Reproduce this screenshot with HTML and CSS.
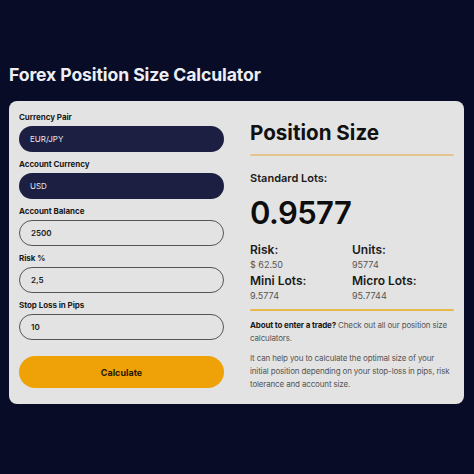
FILE: index.html
```html
<!DOCTYPE html>
<html>
<head>
<meta charset="utf-8">
<link rel="stylesheet" href="styles.css">
</head>
<body>
<div class="page">
  <h1 class="title">Forex Position Size Calculator</h1>
  <div class="card">
    <div class="form">
      <div class="group">
        <div class="label">Currency Pair</div>
        <div class="field dark">EUR/JPY</div>
      </div>
      <div class="group">
        <div class="label">Account Currency</div>
        <div class="field dark">USD</div>
      </div>
      <div class="group">
        <div class="label">Account Balance</div>
        <div class="field outline">2500</div>
      </div>
      <div class="group">
        <div class="label">Risk %</div>
        <div class="field outline">2,5</div>
      </div>
      <div class="group">
        <div class="label">Stop Loss in Pips</div>
        <div class="field outline">10</div>
      </div>
      <div class="button">Calculate</div>
    </div>
    <div class="result">
      <div class="res-title">Position Size</div>
      <div class="rule tan"></div>
      <div class="std-label">Standard Lots:</div>
      <div class="big">0.9577</div>
      <div class="stats">
        <div class="stat"><div class="stat-k">Risk:</div><div class="stat-v">$ 62.50</div></div>
        <div class="stat"><div class="stat-k">Units:</div><div class="stat-v">95774</div></div>
        <div class="stat"><div class="stat-k">Mini Lots:</div><div class="stat-v">9.5774</div></div>
        <div class="stat"><div class="stat-k">Micro Lots:</div><div class="stat-v">95.7744</div></div>
      </div>
      <div class="rule gold"></div>
      <p class="note first"><b>About to enter a trade?</b> Check out all our position size calculators.</p>
      <p class="note">It can help you to calculate the optimal size of your initial position depending on your stop-loss in pips, risk tolerance and account size.</p>
    </div>
  </div>
</div>
</body>
</html>
```
FILE: styles.css
```css
html, body {
  margin: 0;
  padding: 0;
  background: #080c26;
  font-family: Inter, "Noto Sans", sans-serif;
}
.page {
  width: 474px;
  height: 474px;
  padding: 62px 10px 0 9px;
  box-sizing: border-box;
}
.title {
  margin: 0;
  font-size: 17.6px;
  line-height: 26px;
  font-weight: 700;
  color: #eceef4;
  letter-spacing: -0.1px;
}
.card {
  margin-top: 13px;
  background: #e3e3e3;
  border-radius: 8px;
  height: 303px;
  box-sizing: border-box;
  padding: 10px 10px 16px 10px;
  display: flex;
  gap: 26px;
}
.form {
  width: 205px;
  flex-shrink: 0;
  display: flex;
  flex-direction: column;
}
.group {
  display: flex;
  flex-direction: column;
  margin-bottom: 6px;
}
.label {
  font-size: 8px;
  line-height: 13px;
  font-weight: 700;
  color: #1a1a1a;
  margin-bottom: 2px;
  letter-spacing: -0.05px;
}
.field {
  height: 26px;
  border-radius: 13px;
  box-sizing: border-box;
  padding-left: 11px;
  font-size: 8px;
  display: flex;
  align-items: center;
}
.field.dark {
  background: #1c1f41;
  color: #e6e6ee;
}
.field.outline {
  border: 1px solid #555;
  color: #1a1a1a;
  font-weight: 600;
}
.button {
  margin-top: 10px;
  height: 32px;
  border-radius: 16px;
  background: #efa208;
  color: #2a1800;
  font-size: 9px;
  font-weight: 700;
  display: flex;
  align-items: center;
  justify-content: center;
}
.result {
  width: 204px;
  flex-shrink: 0;
  display: flex;
  flex-direction: column;
}
.result > * {
  flex-shrink: 0;
}
.res-title {
  margin-top: 9px;
  font-size: 20.6px;
  line-height: 26px;
  font-weight: 700;
  color: #111;
}
.rule {
  height: 2px;
  border-radius: 1px;
}
.rule.tan {
  margin-top: 8px;
  background: #e3c58e;
}
.rule.gold {
  margin-top: 5px;
  background: #e9b84a;
}
.std-label {
  margin-top: 15px;
  font-size: 11px;
  line-height: 14px;
  font-weight: 600;
  color: #1a1a1a;
}
.big {
  margin-top: 10px;
  font-size: 31px;
  line-height: 36px;
  font-weight: 600;
  letter-spacing: -0.6px;
  color: #0d0d0d;
}
.stats {
  margin-top: 11px;
  display: grid;
  grid-template-columns: 102px 102px;
}
.stat-k {
  font-size: 12px;
  line-height: 15px;
  font-weight: 600;
  color: #1a1a1a;
}
.stat-v {
  font-size: 9px;
  line-height: 16px;
  color: #555;
}
.note {
  margin: 7px 0 0 0;
  font-size: 8px;
  line-height: 13px;
  letter-spacing: -0.15px;
  color: #555;
}
.note.first {
  margin-top: 8px;
}
.note b {
  color: #1a1a1a;
  font-weight: 700;
}
```
